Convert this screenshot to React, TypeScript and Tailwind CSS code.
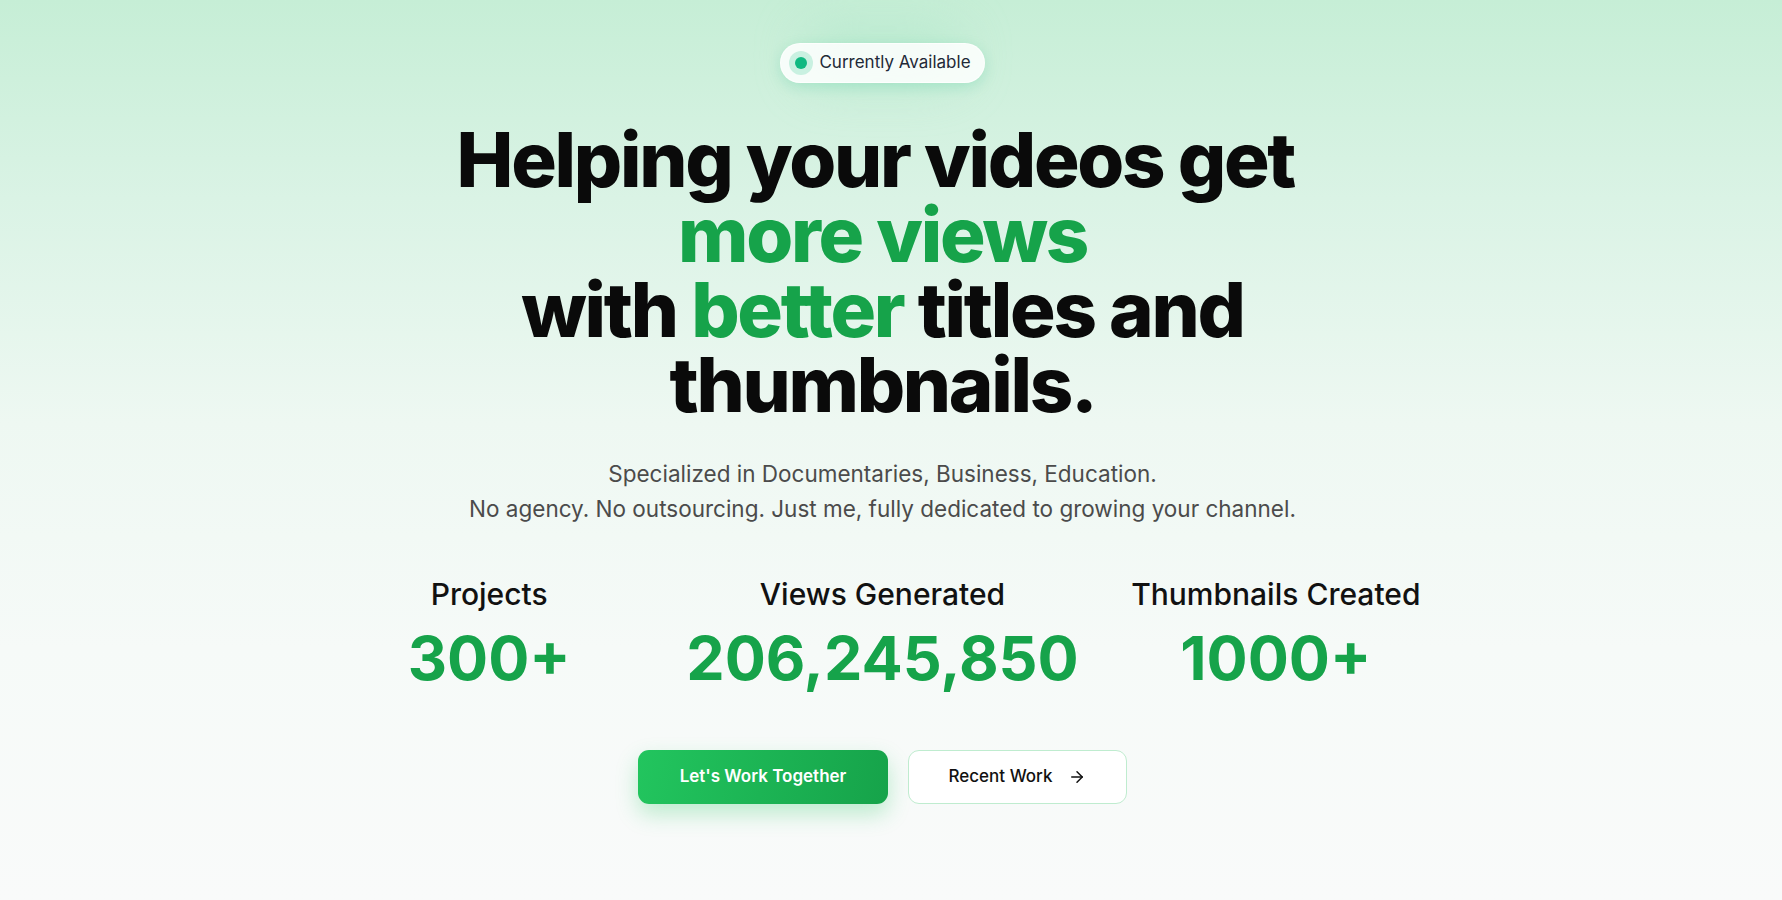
import { ArrowRight } from "lucide-react";

const stats = [
  { label: "Projects", value: "300+" },
  { label: "Views Generated", value: "206,245,850" },
  { label: "Thumbnails Created", value: "1000+" },
];

export default function App() {
  return (
    <main className="min-h-[900px] w-full bg-[linear-gradient(180deg,#c6eed6_0%,#daf3e5_22%,#eef8f2_47%,#f6faf8_72%,#f9fafa_100%)] font-['Inter',sans-serif]">
      <div className="flex flex-col items-center pr-[17px] pt-[43px]">
        <div className="relative">
          <div className="pointer-events-none absolute -top-4 left-1/2 h-14 w-40 -translate-x-1/2 rounded-full bg-[#a7e6c6]/50 blur-xl" />
          <div className="relative flex h-10 items-center gap-[6px] rounded-full border border-white/70 bg-white/85 pl-[8px] pr-[13px] shadow-[0_4px_14px_rgba(16,185,129,0.18)]">
            <span className="flex size-[24px] items-center justify-center rounded-full bg-[#c9f1e1]">
              <span className="size-[12px] rounded-full bg-[#10b981]" />
            </span>
            <span className="text-[17px] text-[#1f2937]">Currently Available</span>
          </div>
        </div>

        <h1 className="mt-[39px] text-center text-[76px] font-extrabold leading-[75px] tracking-[-0.03em] text-[#0a0a0a]">
          Helping your videos get{"\u00a0"}
          <br />
          <span className="text-[#16a34a]">more views</span>
          <br />
          with <span className="text-[#16a34a]">better</span> titles and
          <br />
          thumbnails.
        </h1>

        <div className="mt-[34px] text-center text-[22.5px] leading-[35px] text-[#4b4b4b]">
          <p>Specialized in Documentaries, Business, Education.</p>
          <p>No agency. No outsourcing. Just me, fully dedicated to growing your channel.</p>
        </div>

        <div className="mt-[50px] grid w-[1180px] grid-cols-3">
          {stats.map((s) => (
            <div key={s.label} className="flex flex-col items-center">
              <p className="text-[30px] font-medium leading-[36px] text-[#111111]">{s.label}</p>
              <p className="mt-[12px] text-[61px] font-bold leading-[68px] text-[#16a34a]">
                {s.value}
              </p>
            </div>
          ))}
        </div>

        <div className="mt-[58px] flex items-center gap-[20px]">
          <button className="flex h-[54px] w-[250px] items-center justify-center rounded-[11px] bg-[linear-gradient(100deg,#22c55e,#16a34a)] text-[17px] font-semibold text-white shadow-[0_10px_22px_rgba(34,197,94,0.28)]">
            Let&apos;s Work Together
          </button>
          <button className="flex h-[54px] w-[219px] items-center justify-center gap-[16px] rounded-[11px] border border-[#bfeccf] bg-white text-[17px] font-medium text-[#111111]">
            Recent Work
            <ArrowRight className="size-[18px]" strokeWidth={2} />
          </button>
        </div>
      </div>
    </main>
  );
}
